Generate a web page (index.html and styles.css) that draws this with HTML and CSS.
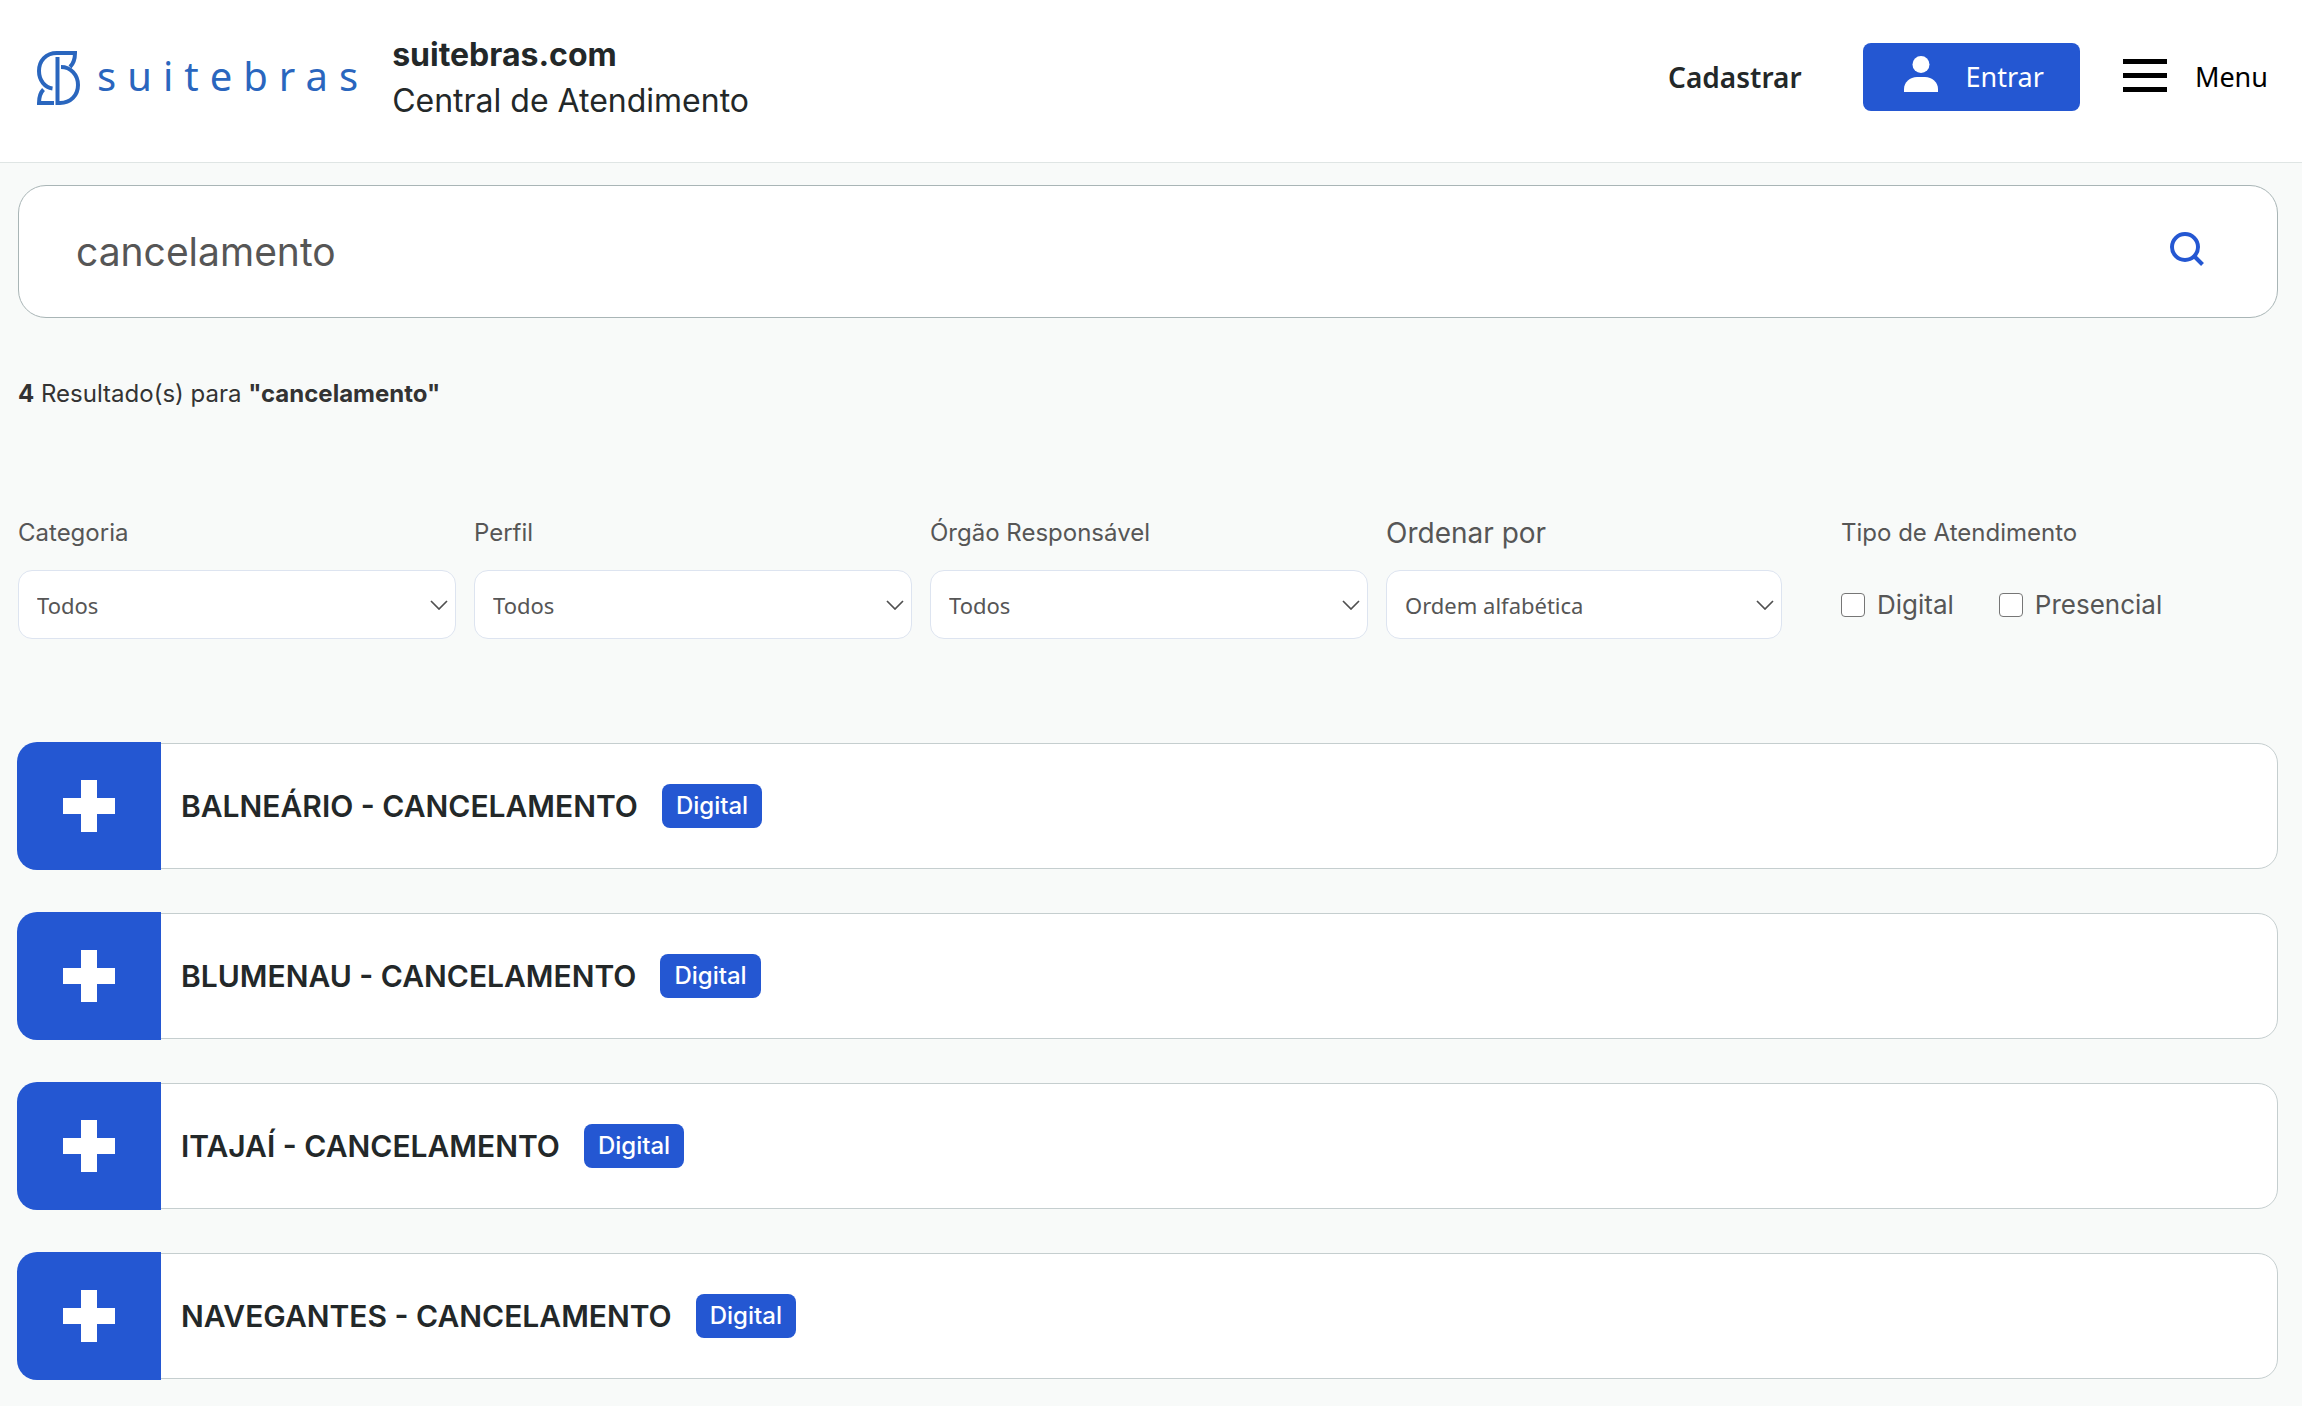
FILE: index.html
```html
<!DOCTYPE html>
<html lang="pt-BR">
<head>
  <meta charset="utf-8">
  <meta name="viewport" content="width=device-width, initial-scale=1">
  <title>Central de Atendimento</title>
  <link rel="stylesheet" href="styles.css">
</head>
<body>
  <header class="header">
    <a class="logo" href="#">
      <svg class="logo-mark" viewBox="0 0 43 54" aria-hidden="true">
        <g fill="none" stroke="currentColor" stroke-width="4">
          <path d="M15.500 37.500C8 36.500 2 29.500 2 20C2 9.500 9 2 20 2H38C38 8 36.500 12.500 33 16"/>
          <path d="M20.500 6V54"/>
          <path d="M24 16C33.500 16 41 23.500 41 34C41 44.500 33.500 52 23 52H20"/>
          <path d="M6.500 38.500C3 42 2 46 2 52H17"/>
        </g>
      </svg>
      <span class="logo-word">suitebras</span>
    </a>
    <div class="brand">
      <strong>suitebras.com</strong>
      <span>Central de Atendimento</span>
    </div>
    <nav class="actions">
      <a class="signup" href="#">Cadastrar</a>
      <button class="login" type="button">
        <svg class="icon-user" viewBox="0 0 34 36" aria-hidden="true"><ellipse cx="17" cy="8.500" rx="8.500" ry="8.500"/><path d="M0 36V33C0 26 6 21 13 21H21C28 21 34 26 34 33V36Z"/></svg>
        Entrar
      </button>
      <button class="menu" type="button">
        <svg class="icon-menu" viewBox="0 0 44 33" aria-hidden="true"><path d="M0 0H44V5H0ZM0 14H44V19H0ZM0 28H44V33H0Z"/></svg>
        Menu
      </button>
    </nav>
  </header>

  <main class="page">
    <form class="search" role="search">
      <input class="search-input" type="text" value="cancelamento" aria-label="Buscar">
      <button class="search-button" type="button" aria-label="Pesquisar">
        <svg class="icon-search" viewBox="0 0 34 34" aria-hidden="true"><circle cx="15" cy="15" r="13"/><path d="M24 24L32.500 32.500"/></svg>
      </button>
    </form>

    <p class="summary"><strong>4</strong> Resultado(s) para <strong>"cancelamento"</strong></p>

    <form class="filters">
      <div class="field">
        <label for="categoria">Categoria</label>
        <select id="categoria"><option>Todos</option></select>
      </div>
      <div class="field">
        <label for="perfil">Perfil</label>
        <select id="perfil"><option>Todos</option></select>
      </div>
      <div class="field">
        <label for="orgao">Órgão Responsável</label>
        <select id="orgao"><option>Todos</option></select>
      </div>
      <div class="field field-sort">
        <label for="ordem">Ordenar por</label>
        <select id="ordem"><option>Ordem alfabética</option></select>
      </div>
      <fieldset class="field field-type">
        <legend>Tipo de Atendimento</legend>
        <div class="checks">
          <label class="check"><input type="checkbox">Digital</label>
          <label class="check"><input type="checkbox">Presencial</label>
        </div>
      </fieldset>
    </form>

    <section class="results">
      <article class="card">
        <button class="expand" type="button" aria-label="Expandir"><svg class="icon-plus" viewBox="0 0 52 52" aria-hidden="true"><path d="M18 0H34V18H52V34H34V52H18V34H0V18H18Z"/></svg></button>
        <h2>BALNEÁRIO - CANCELAMENTO</h2>
        <span class="badge">Digital</span>
      </article>
      <article class="card">
        <button class="expand" type="button" aria-label="Expandir"><svg class="icon-plus" viewBox="0 0 52 52" aria-hidden="true"><path d="M18 0H34V18H52V34H34V52H18V34H0V18H18Z"/></svg></button>
        <h2>BLUMENAU - CANCELAMENTO</h2>
        <span class="badge">Digital</span>
      </article>
      <article class="card">
        <button class="expand" type="button" aria-label="Expandir"><svg class="icon-plus" viewBox="0 0 52 52" aria-hidden="true"><path d="M18 0H34V18H52V34H34V52H18V34H0V18H18Z"/></svg></button>
        <h2>ITAJAÍ - CANCELAMENTO</h2>
        <span class="badge">Digital</span>
      </article>
      <article class="card">
        <button class="expand" type="button" aria-label="Expandir"><svg class="icon-plus" viewBox="0 0 52 52" aria-hidden="true"><path d="M18 0H34V18H52V34H34V52H18V34H0V18H18Z"/></svg></button>
        <h2>NAVEGANTES - CANCELAMENTO</h2>
        <span class="badge">Digital</span>
      </article>
    </section>
  </main>
</body>
</html>
```
FILE: styles.css
```css
:root {
  --blue: #2457d2;
  --logo-blue: #2a66be;
  --ink: #232829;
  --text: #565656;
  --ui: "Noto Sans", "Open Sans", sans-serif;
}

* { box-sizing: border-box; }

body {
  margin: 0;
  background: #f8faf9;
  color: var(--ink);
  font-family: Inter, sans-serif;
  font-size: 24px;
}

button, input, select { font: inherit; color: inherit; margin: 0; }
button { border: 0; padding: 0; background: none; cursor: pointer; }
a { color: inherit; text-decoration: none; }
svg { display: block; flex: none; }

/* Header */
.header {
  display: flex;
  align-items: center;
  padding: 32px 34px 38px 37px;
  background: #fff;
  border-bottom: 1px solid #dfe5e4;
}

.logo { display: flex; align-items: center; gap: 17px; color: var(--logo-blue); }
.logo-mark { width: 43px; height: 54px; }
.logo-word {
  padding-bottom: 4px;
  font: 40px/48px var(--ui);
  letter-spacing: 11px;
}

.brand {
  display: flex;
  flex-direction: column;
  margin-left: 23px;
  font-size: 32px;
  line-height: 46px;
}
.brand strong { font-weight: 700; }

.actions {
  display: flex;
  align-items: center;
  margin: 0 0 2px auto;
  font: 27px/38px var(--ui);
}
.signup { margin-right: 61px; font-size: 28px; font-weight: 600; }
.login {
  display: flex;
  align-items: center;
  gap: 28px;
  height: 68px;
  margin-right: 43px;
  padding: 0 36px 0 41px;
  border-radius: 8px;
  background: var(--blue);
  color: #fff;
}
.icon-user { width: 34px; height: 36px; margin-bottom: 6px; fill: currentColor; }
.menu { display: flex; align-items: center; gap: 28px; color: #000; }
.icon-menu { width: 44px; height: 33px; margin-bottom: 4px; }

/* Page */
.page { padding: 22px 24px 28px 18px; }

.search {
  display: flex;
  align-items: center;
  height: 133px;
  padding: 0 73px 0 57px;
  border: 1px solid #a9b5b6;
  border-radius: 28px;
  background: #fff;
}
.search-input {
  flex: 1;
  min-width: 0;
  padding: 0;
  border: 0;
  outline: 0;
  background: none;
  color: var(--text);
  font-size: 39px;
  line-height: 52px;
}
.search-button { padding-bottom: 6px; }
.icon-search { width: 34px; height: 34px; fill: none; stroke: var(--blue); stroke-width: 4; }

.summary { margin: 61px 0 0; line-height: 30px; color: #333; }
.summary strong { font-weight: 700; }

/* Filters */
.filters {
  display: grid;
  grid-template-columns: 438fr 438fr 438fr 396fr 478fr;
  gap: 18px;
  margin-top: 109px;
  color: var(--text);
}
.field {
  display: flex;
  flex-direction: column;
  gap: 22px;
  min-width: 0;
  margin: 0;
  padding: 0;
  border: 0;
  line-height: 30px;
}
.field-sort { font-size: 28px; }
.field select {
  width: 100%;
  height: 69px;
  padding: 0 40px 0 18px;
  appearance: none;
  border: 1px solid #dde4f0;
  border-radius: 14px;
  background: #fff url("data:image/svg+xml,%3Csvg xmlns='http://www.w3.org/2000/svg' width='18' height='10' viewBox='0 0 18 10'%3E%3Cpath d='M1 1L9 9L17 1' fill='none' stroke='%23505050' stroke-width='1.7'/%3E%3C/svg%3E") no-repeat right 7px center;
  font: 22px/30px var(--ui);
}
.field-type { padding-left: 41px; }
.field-type legend { padding: 0; }
.checks {
  display: flex;
  align-items: center;
  gap: 45px;
  height: 69px;
  margin-top: 22px;
  font-size: 26px;
}
.check { display: flex; align-items: center; gap: 12px; }
.check input {
  width: 24px;
  height: 24px;
  appearance: none;
  border: 1px solid #767676;
  border-radius: 4px;
  background: #fff;
}
.check input:checked { background: var(--blue); }

/* Results */
.results { display: flex; flex-direction: column; gap: 44px; margin-top: 104px; }
.card {
  display: flex;
  align-items: center;
  height: 126px;
  border: 1px solid #c5cecf;
  border-radius: 20px;
  background: #fff;
}
.expand {
  display: grid;
  place-items: center;
  align-self: stretch;
  width: 144px;
  margin: -2px 20px -2px -2px;
  border-radius: 20px 0 0 20px;
  background: var(--blue);
}
.icon-plus { width: 52px; height: 52px; fill: #fff; }
.card h2 { margin: 0; font-size: 30px; font-weight: 600; line-height: 40px; }
.badge {
  margin-left: 24px;
  padding: 0 14px;
  border-radius: 8px;
  background: var(--blue);
  color: #fff;
  font-size: 24px;
  font-weight: 500;
  line-height: 44px;
}
```
